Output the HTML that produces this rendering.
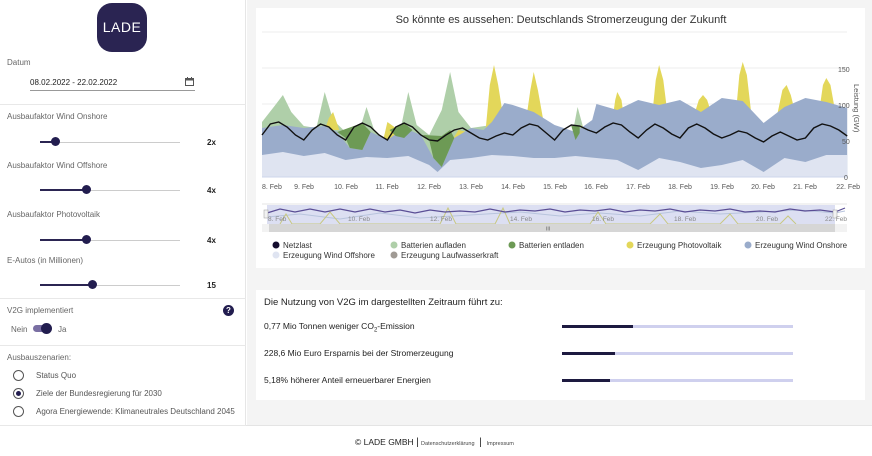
<!DOCTYPE html>
<html><head><meta charset="utf-8">
<style>
*{margin:0;padding:0;box-sizing:border-box}
body{width:872px;height:456px;overflow:hidden;background:#fff;font-family:"Liberation Sans",sans-serif;color:#333;position:relative}
.abs{position:absolute}
#side{left:0;top:0;width:246px;height:425px;background:#fff;border-right:1px solid #e6e6e6}
#main{left:247px;top:0;width:625px;height:425px;background:#f4f4f4}
.card{background:#fff}
.lbl{font-size:8px;color:#666}
.val{font-size:8px;color:#222;font-weight:bold}
.hr{height:1px;background:#e8e8e8;left:0;width:246px}
.track{height:1px;background:#ccc;width:140px;left:40px}
.fill{height:2px;background:#2b2552}
.knob{width:9px;height:9px;border-radius:50%;background:#221d4f}
.radio{width:11px;height:11px;border:1px solid #555;border-radius:50%;left:13px;background:#fff}
.rl{font-size:8px;color:#555;left:36px}
.st{font-size:8.5px;color:#222;left:264px}
.bar{left:562px;width:231px;height:3px;background:#cfd0ee}
.bar i{display:block;height:3px;background:#1d1a40}
.ax{font-size:7px;fill:#555;font-family:"Liberation Sans",sans-serif}
.lg{font-size:8px;fill:#333;font-family:"Liberation Sans",sans-serif}
</style></head><body>
<div id="side" class="abs"></div>
<div id="main" class="abs"></div>
<div class="abs card" style="left:256px;top:8px;width:609px;height:260px"></div>
<div class="abs card" style="left:256px;top:290px;width:609px;height:110px"></div>
<div class="abs" style="left:0;top:425px;width:872px;height:1px;background:#e4e4e4"></div>

<div class="abs" style="left:97px;top:3px;width:50px;height:49px;border-radius:15px;background:#2a2452;color:#fff;font-size:14px;letter-spacing:0.5px;text-align:center;line-height:49px">LADE</div>
<div class="abs lbl" style="left:7px;top:58px">Datum</div>
<div class="abs" style="left:30px;top:78px;font-size:8px;color:#222">08.02.2022 - 22.02.2022</div>
<svg class="abs" style="left:185px;top:77px" width="9" height="9" viewBox="0 0 9 9"><rect x="0.5" y="1.5" width="8" height="7" fill="none" stroke="#555"/><rect x="0.5" y="1.5" width="8" height="2" fill="#555"/><rect x="2" y="0" width="1" height="2" fill="#555"/><rect x="6" y="0" width="1" height="2" fill="#555"/></svg>
<div class="abs" style="left:30px;top:90px;width:165px;height:1px;background:#999"></div>
<div class="abs hr" style="top:104px"></div>

<div class="abs lbl" style="left:7px;top:112px">Ausbaufaktor Wind Onshore</div>
<div class="abs track" style="top:142px"></div><div class="abs fill" style="left:40px;top:141px;width:15px"></div><div class="abs knob" style="left:51px;top:137px"></div>
<div class="abs val" style="left:207px;top:138px">2x</div>
<div class="abs lbl" style="left:7px;top:161px">Ausbaufaktor Wind Offshore</div>
<div class="abs track" style="top:190px"></div><div class="abs fill" style="left:40px;top:189px;width:46px"></div><div class="abs knob" style="left:82px;top:185px"></div>
<div class="abs val" style="left:207px;top:186px">4x</div>
<div class="abs lbl" style="left:7px;top:210px">Ausbaufaktor Photovoltaik</div>
<div class="abs track" style="top:240px"></div><div class="abs fill" style="left:40px;top:239px;width:46px"></div><div class="abs knob" style="left:82px;top:235px"></div>
<div class="abs val" style="left:207px;top:236px">4x</div>
<div class="abs lbl" style="left:7px;top:256px">E-Autos (in Millionen)</div>
<div class="abs track" style="top:285px"></div><div class="abs fill" style="left:40px;top:284px;width:52px"></div><div class="abs knob" style="left:88px;top:280px"></div>
<div class="abs val" style="left:207px;top:281px">15</div>
<div class="abs hr" style="top:298px"></div>
<div class="abs lbl" style="left:7px;top:306px">V2G implementiert</div>
<div class="abs" style="left:223px;top:305px;width:11px;height:11px;border-radius:50%;background:#221d4f;color:#fff;font-size:8px;font-weight:bold;text-align:center;line-height:11px">?</div>
<div class="abs lbl" style="left:11px;top:325px">Nein</div>
<div class="abs" style="left:33px;top:325px;width:18px;height:7px;border-radius:4px;background:#7a6fa3"></div>
<div class="abs" style="left:41px;top:323px;width:11px;height:11px;border-radius:50%;background:#221d4f"></div>
<div class="abs lbl" style="left:58px;top:325px">Ja</div>
<div class="abs hr" style="top:345px"></div>
<div class="abs lbl" style="left:7px;top:353px">Ausbauszenarien:</div>
<div class="abs radio" style="top:370px"></div><div class="abs rl" style="top:371px">Status Quo</div>
<div class="abs radio" style="top:388px"></div><div class="abs" style="left:16px;top:391px;width:5px;height:5px;border-radius:50%;background:#221d4f"></div><div class="abs rl" style="top:389px">Ziele der Bundesregierung für 2030</div>
<div class="abs radio" style="top:406px"></div><div class="abs rl" style="top:407px">Agora Energiewende: Klimaneutrales Deutschland 2045</div>
<div class="abs hr" style="top:425px"></div>

<svg class="abs" style="left:0;top:0" width="872" height="272">
<text x="561" y="23" text-anchor="middle" style="font-size:11px;fill:#333;font-family:'Liberation Sans',sans-serif">So könnte es aussehen: Deutschlands Stromerzeugung der Zukunft</text>
<g stroke="#ececec" stroke-width="1"><line x1="262" y1="32" x2="847" y2="32"/><line x1="262" y1="68" x2="847" y2="68"/><line x1="262" y1="104" x2="847" y2="104"/><line x1="262" y1="141" x2="847" y2="141"/></g>
<g transform="translate(262,0) scale(41.8,1)">
<polygon fill="#afcfa9" points="0,177 0,122 0.3,106 0.5,95 0.7,112 1,126 1.3,128 1.5,92 1.7,120 2,132 2.3,135 2.5,107 2.7,132 3,140 3.3,132 3.5,92 3.7,125 4,135 4.3,110 4.5,72 4.7,112 5,128 5.5,125 5.7,140 7.4,140 7.55,107 7.7,130 7.8,177"/>
<g fill="#e3d75a">
<polygon points="1.5,130 1.6,118 1.7,112 1.85,130"/>
<polygon points="2.9,140 3.0,122 3.2,128 3.3,140"/>
<polygon points="4.55,140 4.7,130 4.9,132 4.95,140"/>
<polygon points="5.35,130 5.45,85 5.55,65 5.65,85 5.8,125"/>
<polygon points="6.3,125 6.42,90 6.5,72 6.6,90 6.75,125"/>
<polygon points="7.5,145 7.65,125 7.8,145"/>
<polygon points="8.35,130 8.45,100 8.5,92 8.6,100 8.7,130"/>
<polygon points="9.3,130 9.42,80 9.5,65 9.6,80 9.75,130"/>
<polygon points="10.3,120 10.45,100 10.55,95 10.65,100 10.8,120"/>
<polygon points="11.3,130 11.42,75 11.5,62 11.6,75 11.75,130"/>
<polygon points="12.3,120 12.45,90 12.55,85 12.65,95 12.8,120"/>
<polygon points="13.3,120 13.42,85 13.5,78 13.6,85 13.75,120"/>
</g>
<polygon fill="#9aaccb" points="0,177 0,128 0.5,125 1,128 1.5,126 1.8,132 2.1,148 2.4,150 2.6,132 3,140 3.4,128 3.8,135 4.1,158 4.3,167 4.6,138 5,128 5.3,130 5.5,122 5.8,103 6,105 6.5,112 7,125 7.5,132 7.9,120 8,104 8.5,110 9,100 9.5,105 10,100 10.5,112 11,98 11.5,101 12,123 12.5,107 13,98 13.5,102 14,108 14,177"/>
<polygon fill="#dfe4f1" points="0,177 0,155 0.5,152 1,156 1.5,153 2,160 2.5,157 3,158 3.5,156 4,165 4.2,172 4.5,160 5,158 5.5,155 6,156 6.5,158 7,158 7.5,156 8,158 8.5,160 9,170 9.5,158 10,162 10.5,168 11,165 11.5,160 12,172 12.5,158 13,162 13.5,155 14,155 14,177"/>
<g fill="#6d9a55">
<polygon points="1.8,132 2.0,138 2.1,148 2.4,150 2.6,132 2.4,123 2.2,126"/>
<polygon points="3.05,130 3.2,136 3.4,138 3.6,130 3.4,123"/>
<polygon points="3.85,135 4.0,140 4.1,158 4.3,167 4.6,138 4.5,130 4.3,136"/>
<polygon points="7.4,126 7.5,140 7.6,133 7.6,126"/>
</g>
<polyline fill="none" stroke="#111" stroke-width="1.4" vector-effect="non-scaling-stroke" points="0,135 0.2,124 0.4,122 0.6,127 0.8,135 1,140 1.2,130 1.4,124 1.6,127 1.8,135 2,140 2.2,127 2.4,123 2.6,127 2.8,135 3,140 3.2,127 3.4,123 3.6,127 3.8,135 4,140 4.2,141 4.4,135 4.6,130 4.8,128 5,133 5.2,138 5.4,140 5.6,136 5.8,133 6,135 6.2,128 6.4,124 6.6,126 6.8,133 7,140 7.2,130 7.4,125 7.6,126 7.8,130 8,133 8.2,127 8.4,123 8.6,125 8.8,132 9,138 9.2,130 9.4,124 9.6,128 9.8,134 10,138 10.2,128 10.4,124 10.6,128 10.8,134 11,138 11.2,135 11.4,131 11.6,133 11.8,138 12,142 12.2,136 12.4,132 12.6,136 12.8,140 13,138 13.2,128 13.4,124 13.6,126 13.8,130 14,136"/>
</g>
<line x1="262" y1="177" x2="847" y2="177" stroke="#ccd6eb"/>
<g class="ax">
<text x="838" y="72">150</text><text x="838" y="108">100</text><text x="842" y="144">50</text><text x="844" y="180">0</text>
<text x="262" y="189">8. Feb</text>
<text x="304" y="189" text-anchor="middle">9. Feb</text><text x="346" y="189" text-anchor="middle">10. Feb</text><text x="387" y="189" text-anchor="middle">11. Feb</text><text x="429" y="189" text-anchor="middle">12. Feb</text><text x="471" y="189" text-anchor="middle">13. Feb</text><text x="513" y="189" text-anchor="middle">14. Feb</text><text x="555" y="189" text-anchor="middle">15. Feb</text><text x="596" y="189" text-anchor="middle">16. Feb</text><text x="638" y="189" text-anchor="middle">17. Feb</text><text x="680" y="189" text-anchor="middle">18. Feb</text><text x="722" y="189" text-anchor="middle">19. Feb</text><text x="763" y="189" text-anchor="middle">20. Feb</text><text x="805" y="189" text-anchor="middle">21. Feb</text><text x="860" y="189" text-anchor="end">22. Feb</text>
<text transform="translate(854,84) rotate(90)" style="font-size:7.5px">Leistung (GW)</text>
</g>
<line x1="262" y1="204" x2="847" y2="204" stroke="#e6e6e6"/>
<rect x="267" y="205" width="568" height="19" fill="#dcdff2"/>
<polyline fill="none" stroke="#b8c4dd" points="267,217 300,214 340,219 380,213 420,218 470,215 520,212 560,216 600,213 640,216 680,211 720,214 760,212 800,210 835,213 845,211"/>
<polyline fill="none" stroke="#c8c880" points="280,224 286,214 292,224 320,224 330,212 340,224 440,224 448,208 456,224 495,224 503,208 510,224 590,224 598,212 606,224 650,224 660,214 668,224 720,224 730,214 738,224 780,224 788,216 796,224"/>
<polyline fill="none" stroke="#5a4e95" stroke-width="1.2" points="267,213 280,209 295,212 310,209 325,212 340,209 355,212 370,209 385,212 400,210 415,213 430,210 445,212 460,211 475,212 490,209 505,212 520,210 535,211 550,209 565,212 580,210 595,211 610,209 625,212 640,210 655,211 670,209 685,212 700,210 715,211 730,209 745,212 760,211 775,212 790,209 805,211 820,210 835,212 845,208"/>
<rect x="264" y="210" width="4" height="8" fill="#f2f2f2" stroke="#999" stroke-width="0.5"/>
<rect x="833" y="210" width="4" height="8" fill="#f2f2f2" stroke="#999" stroke-width="0.5"/>
<g class="ax" style="font-size:6.5px;fill:#888"><text x="268" y="221">8. Feb</text><text x="348" y="221">10. Feb</text><text x="430" y="221">12. Feb</text><text x="510" y="221">14. Feb</text><text x="592" y="221">16. Feb</text><text x="674" y="221">18. Feb</text><text x="756" y="221">20. Feb</text><text x="825" y="221">22. Feb</text></g>
<rect x="262" y="224" width="585" height="8" fill="#f2f2f2"/>
<rect x="269" y="224" width="566" height="8" fill="#d6d6d6"/>
<text x="546" y="230.5" class="ax" style="font-size:5px">III</text>
<g class="lg">
<circle cx="276" cy="245" r="3.5" fill="#140d2e"/><text x="283" y="248">Netzlast</text>
<circle cx="394" cy="245" r="3.5" fill="#afcfa9"/><text x="401" y="248">Batterien aufladen</text>
<circle cx="512" cy="245" r="3.5" fill="#6d9a55"/><text x="519" y="248">Batterien entladen</text>
<circle cx="630" cy="245" r="3.5" fill="#e3d75a"/><text x="637" y="248">Erzeugung Photovoltaik</text>
<circle cx="748" cy="245" r="3.5" fill="#9aaccb"/><text x="755" y="248">Erzeugung Wind Onshore</text>
<circle cx="276" cy="255" r="3.5" fill="#dfe4f1"/><text x="283" y="258">Erzeugung Wind Offshore</text>
<circle cx="394" cy="255" r="3.5" fill="#a09a94"/><text x="401" y="258">Erzeugung Laufwasserkraft</text>
</g>
</svg>

<div class="abs" style="left:264px;top:297px;font-size:9.5px;color:#222">Die Nutzung von V2G im dargestellten Zeitraum führt zu:</div>
<div class="abs st" style="top:321px">0,77 Mio Tonnen weniger CO<sub style="font-size:6px">2</sub>-Emission</div>
<div class="abs bar" style="top:325px"><i style="width:71px"></i></div>
<div class="abs st" style="top:348px">228,6 Mio Euro Ersparnis bei der Stromerzeugung</div>
<div class="abs bar" style="top:352px"><i style="width:53px"></i></div>
<div class="abs st" style="top:375px">5,18% höherer Anteil erneuerbarer Energien</div>
<div class="abs bar" style="top:379px"><i style="width:48px"></i></div>

<div class="abs" style="left:355px;top:437px;font-size:8.5px;color:#222;white-space:nowrap">© LADE GMBH <span style="font-size:10px">|</span> <span style="font-size:5.5px;color:#444">Datenschutzerklärung</span> &nbsp;<span style="font-size:10px">|</span> &nbsp;<span style="font-size:5.5px;color:#444">Impressum</span></div>
</body></html>
